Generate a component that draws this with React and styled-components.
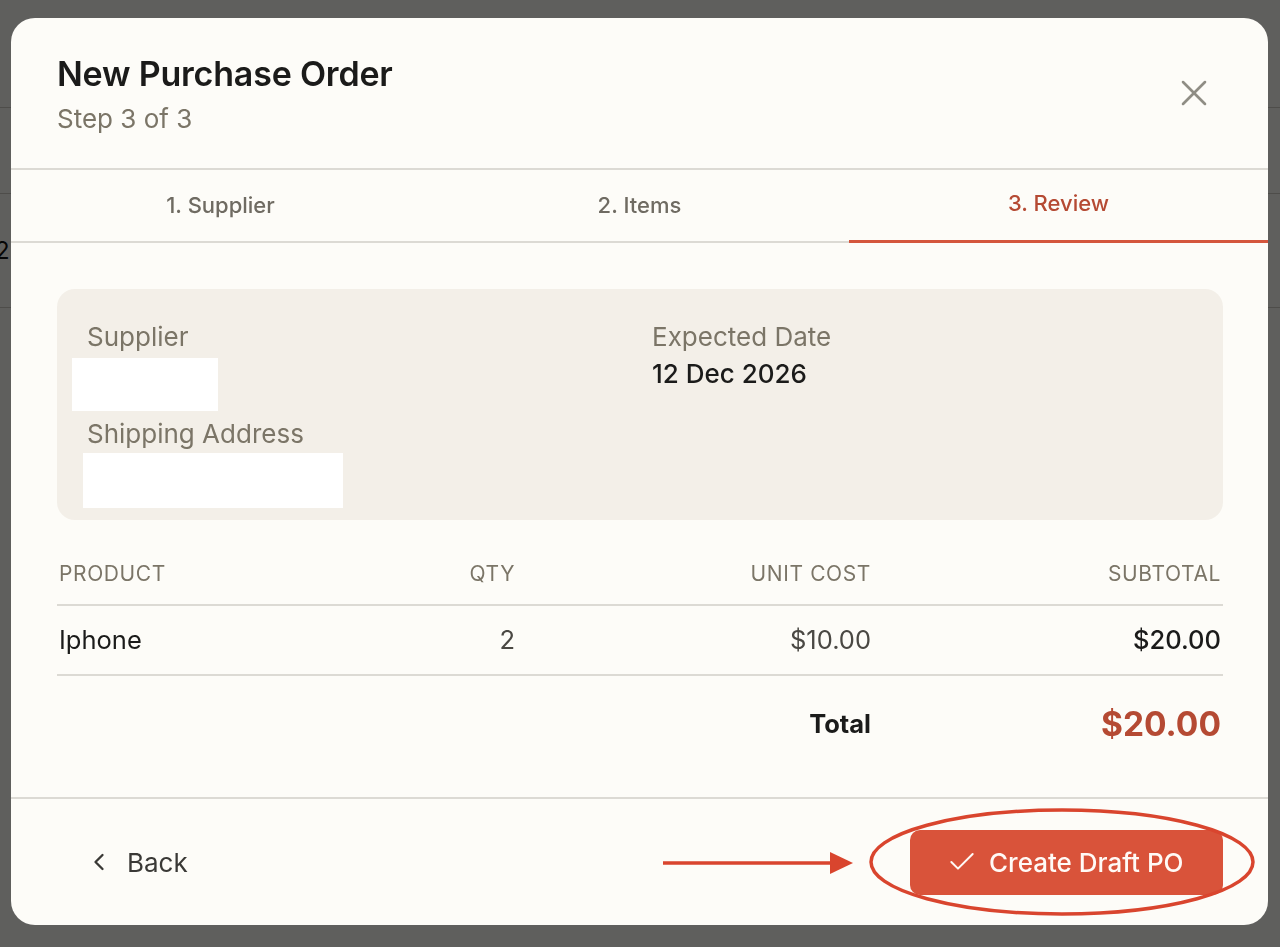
import styled, { createGlobalStyle } from "styled-components";
import { X, ChevronLeft, Check } from "lucide-react";

const GlobalStyle = createGlobalStyle`
  * {
    box-sizing: border-box;
  }
  html, body {
    margin: 0;
    padding: 0;
    background: #fdfcf8;
    font-family: Inter, "Noto Sans", "Liberation Sans", sans-serif;
    -webkit-font-smoothing: antialiased;
  }
`;

// page behind the modal
const Page = styled.div`
  height: 947px;
  overflow: hidden;
  background: #fdfcf8;
`;

const PageRow = styled.div`
  height: ${(p) => p.h}px;
  border-bottom: 1px solid #cfccc4;
  display: flex;
  align-items: center;
  font-size: 24px;
  color: #111;
`;

const Cut = styled.span`
  margin-left: -5px;
`;

const Backdrop = styled.div`
  position: fixed;
  inset: 0;
  background: rgba(0, 0, 0, 0.625);
  padding: 18px 12px 22px 11px;
`;

const Modal = styled.div`
  width: 1257px;
  height: 907px;
  background: #fdfcf8;
  border-radius: 24px;
  display: flex;
  flex-direction: column;
  overflow: hidden;
`;

const Header = styled.div`
  height: 152px;
  padding: 38px 52px 0 46px;
  display: flex;
  justify-content: space-between;
  align-items: flex-start;
  border-bottom: 2px solid #dcdad4;
`;

const Title = styled.h1`
  margin: 0;
  font-size: 34px;
  line-height: 36px;
  font-weight: 600;
  color: #1b1b1a;
  letter-spacing: -0.2px;
`;

const Subtitle = styled.div`
  margin-top: 12px;
  font-size: 26px;
  line-height: 30px;
  color: #7b7567;
`;

const CloseButton = styled.button`
  margin-top: 15px;
  width: 44px;
  height: 44px;
  padding: 0;
  border: none;
  background: transparent;
  color: #8f8d84;
  display: flex;
  align-items: center;
  justify-content: center;
  cursor: pointer;
`;

const Tabs = styled.div`
  display: grid;
  grid-template-columns: repeat(3, 1fr);
  height: 73px;
  border-bottom: 2px solid #dcdad4;
`;

const Tab = styled.div`
  display: flex;
  align-items: center;
  justify-content: center;
  font-size: 22px;
  font-weight: 500;
  color: ${(p) => (p.active ? "#b54a33" : "#6f6b62")};
  border-bottom: 3px solid ${(p) => (p.active ? "#d4563d" : "transparent")};
  margin-bottom: -2px;
  padding-bottom: ${(p) => (p.active ? "4px" : "0")};
`;

const Body = styled.div`
  flex: 1;
  padding: 46px 45px 0 46px;
`;

const SummaryCard = styled.div`
  height: 231px;
  background: #f3efe8;
  border-radius: 18px;
  padding: 33px 30px 12px;
  display: grid;
  grid-template-columns: 1fr 1fr;
  column-gap: 24px;
`;

const Field = styled.div`
  display: flex;
  flex-direction: column;
`;

const Label = styled.div`
  font-size: 26px;
  line-height: 30px;
  color: #7b7567;
  margin-top: ${(p) => p.gap || 0}px;
`;

const Value = styled.div`
  margin-top: 7px;
  font-size: 26px;
  line-height: 30px;
  font-weight: 500;
  color: #1b1b1a;
`;

const Redacted = styled.div`
  background: #ffffff;
  width: ${(p) => p.w}px;
  height: ${(p) => p.h}px;
  margin-left: ${(p) => p.shift}px;
  margin-top: ${(p) => p.top}px;
`;

const Table = styled.div`
  margin-top: 30px;
`;

const Row = styled.div`
  display: grid;
  grid-template-columns: 343px 117px 356px 1fr;
  align-items: center;
  padding: ${(p) => p.pad};
  border-bottom: ${(p) => (p.line ? "2px solid #dcdad4" : "none")};
`;

const Cell = styled.div`
  padding: 0 2px;
  text-align: ${(p) => (p.left ? "left" : "right")};
  font-size: ${(p) => p.size || 25.5}px;
  line-height: ${(p) => p.lh || 24}px;
  font-weight: ${(p) => p.weight || 400};
  color: ${(p) => p.color || "#1b1b1a"};
  letter-spacing: ${(p) => p.spacing || "normal"};
  text-transform: ${(p) => (p.upper ? "uppercase" : "none")};
`;

const Footer = styled.div`
  height: 128px;
  border-top: 2px solid #dcdad4;
  padding: 0 45px 0 74px;
  display: flex;
  align-items: center;
  justify-content: space-between;
`;

const BackButton = styled.button`
  display: flex;
  align-items: center;
  gap: 14px;
  border: none;
  background: transparent;
  padding: 0;
  font-family: inherit;
  font-size: 26px;
  color: #3a3936;
  cursor: pointer;
`;

const PrimaryButton = styled.button`
  width: 313px;
  height: 65px;
  border: none;
  border-radius: 10px;
  background: #d9533a;
  color: #fffaf6;
  font-family: inherit;
  font-size: 26px;
  font-weight: 500;
  display: flex;
  align-items: center;
  gap: 11px;
  padding: 0 0 0 36px;
  cursor: pointer;
`;

// red callout drawn over the footer
const Callout = styled.svg`
  position: fixed;
  left: 0;
  top: 0;
  width: 1280px;
  height: 947px;
  pointer-events: none;
`;

const items = [{ name: "Iphone", qty: 2, cost: 10 }];

const money = (n) => `$${n.toFixed(2)}`;

export default function App() {
  const total = items.reduce((s, i) => s + i.qty * i.cost, 0);

  return (
    <>
      <GlobalStyle />
      <Page>
        <PageRow h={108} />
        <PageRow h={86} />
        <PageRow h={114}>
          <Cut>2</Cut>
        </PageRow>
      </Page>
      <Backdrop>
        <Modal>
          <Header>
            <div>
              <Title>New Purchase Order</Title>
              <Subtitle>Step 3 of 3</Subtitle>
            </div>
            <CloseButton aria-label="Close">
              <X size={44} strokeWidth={1.4} />
            </CloseButton>
          </Header>

          <Tabs>
            <Tab>1. Supplier</Tab>
            <Tab>2. Items</Tab>
            <Tab active>3. Review</Tab>
          </Tabs>

          <Body>
            <SummaryCard>
              <Field>
                <Label>Supplier</Label>
                <Redacted w={146} h={53} shift={-15} top={6} />
                <Label gap={8}>Shipping Address</Label>
                <Redacted w={260} h={55} shift={-4} top={4} />
              </Field>
              <Field>
                <Label>Expected Date</Label>
                <Value>12 Dec 2026</Value>
              </Field>
            </SummaryCard>

            <Table>
              <Row pad="12px 0 18px" line>
                <Cell left upper size={21} color="#7b7567" spacing="0.6px">Product</Cell>
                <Cell upper size={21} color="#7b7567" spacing="0.6px">Qty</Cell>
                <Cell upper size={21} color="#7b7567" spacing="0.6px">Unit Cost</Cell>
                <Cell upper size={21} color="#7b7567" spacing="0.6px">Subtotal</Cell>
              </Row>
              {items.map((it) => (
                <Row key={it.name} pad="22px 0" line>
                  <Cell left>{it.name}</Cell>
                  <Cell color="#4a4843">{it.qty}</Cell>
                  <Cell color="#4a4843">{money(it.cost)}</Cell>
                  <Cell weight={500}>{money(it.qty * it.cost)}</Cell>
                </Row>
              ))}
              <Row pad="32px 0 0">
                <Cell />
                <Cell />
                <Cell weight={700}>Total</Cell>
                <Cell size={33.5} lh={32} weight={700} color="#b54a33">
                  {money(total)}
                </Cell>
              </Row>
            </Table>
          </Body>

          <Footer>
            <BackButton>
              <ChevronLeft size={28} strokeWidth={2} />
              Back
            </BackButton>
            <PrimaryButton>
              <Check size={32} strokeWidth={1.5} />
              Create Draft PO
            </PrimaryButton>
          </Footer>
        </Modal>
      </Backdrop>

      <Callout viewBox="0 0 1280 947">
        <line x1="663" y1="863" x2="834" y2="863" stroke="#d9452e" strokeWidth="3.5" />
        <polygon points="830,852 853,863 830,874" fill="#d9452e" />
        <ellipse cx="1062" cy="862" rx="191" ry="52" fill="none" stroke="#d9452e" strokeWidth="3.5" />
      </Callout>
    </>
  );
}
